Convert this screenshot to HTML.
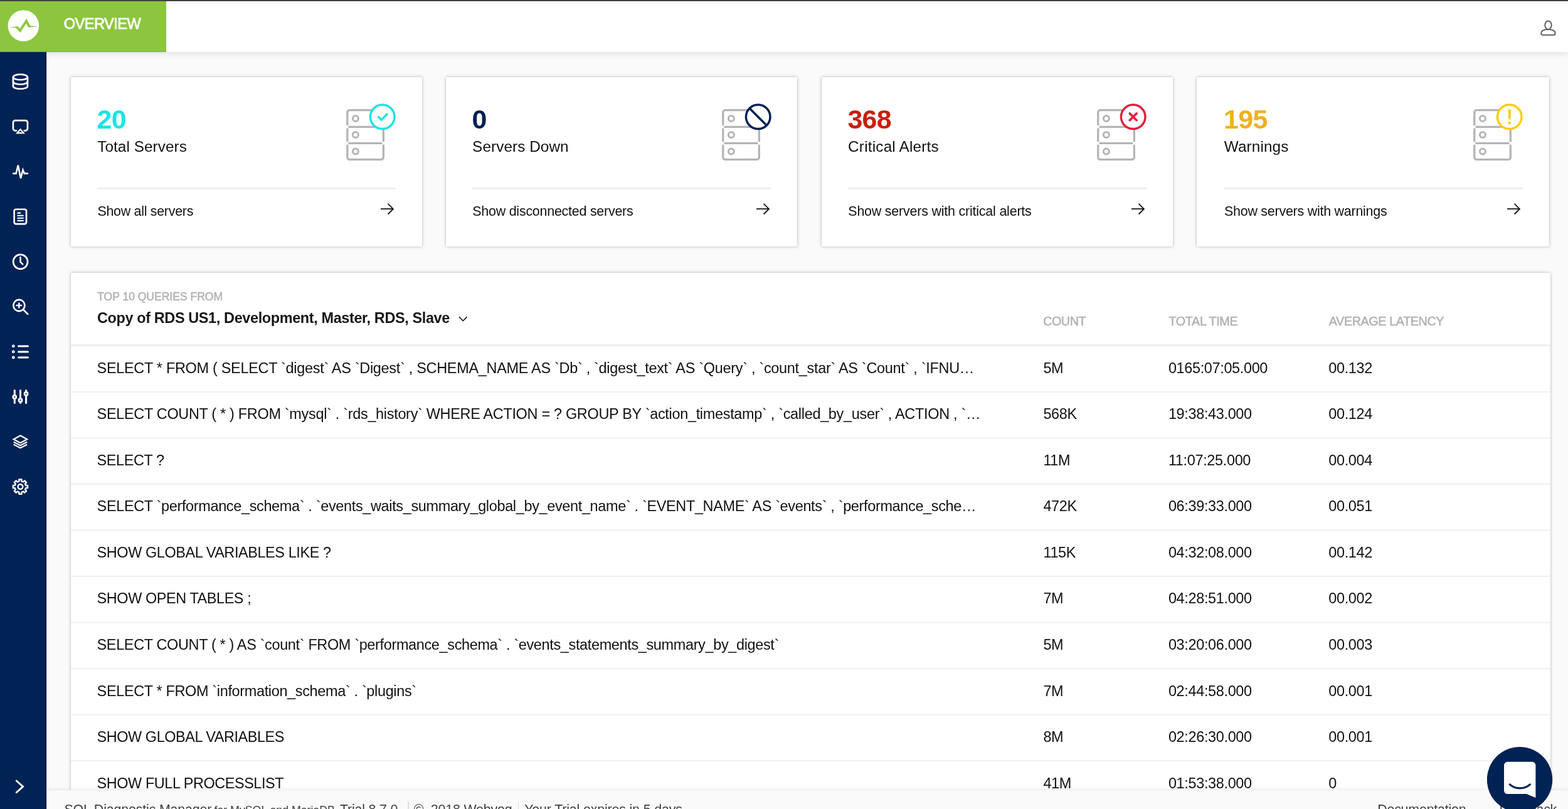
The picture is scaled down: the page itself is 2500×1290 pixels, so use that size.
<!DOCTYPE html>
<html lang="en"><head><meta charset="utf-8"><title>Overview</title>
<style>
*{box-sizing:border-box}
html,body{margin:0;padding:0}
body{width:2500px;height:1290px;overflow:hidden;position:relative;background:#fafafa;font-family:"Liberation Sans",Arial,Helvetica,sans-serif;color:#111}
.abs{position:absolute}
.t{position:absolute;white-space:pre}
#root{position:absolute;left:0;top:0;width:2500px;height:1290px;overflow:hidden;will-change:transform}
#topbar{position:absolute;left:0;top:0;width:2500px;height:1.8px;background:#414141;z-index:30}
#header{position:absolute;left:0;top:0;width:2500px;height:83px;background:#fff;box-shadow:0 1.5px 10px rgba(0,0,0,.12);z-index:20}
#brand{position:absolute;left:0;top:0;width:265px;height:83px;background:#8cc63e;box-shadow:inset 0 -1.2px 0 #7dc20a}
#sidebar{position:absolute;left:0;top:83px;width:74px;height:1207px;background:#012254;z-index:25;box-shadow:inset -1.2px 0 0 rgba(0,0,25,.6),0.5px 0 2px rgba(0,0,0,.12)}
.sbicons{position:absolute;left:0;top:0}
.card{position:absolute;top:122.8px;height:270.1px;background:#fff;box-shadow:0 0 4.5px rgba(0,0,0,.3)}
.card .hr{position:absolute;left:42.3px;right:42px;top:176px;height:3px;background:#efefef}
.card .arr{position:absolute;right:39.55px;top:197.3px}
.sico{position:absolute;right:32.6px;top:37.2px}
#panel{position:absolute;left:112.9px;top:434.8px;width:2359.4px;height:860px;background:#fff;box-shadow:0 0 4.5px rgba(0,0,0,.3)}
#footer{position:absolute;left:74px;top:1260.4px;width:2426px;height:30px;background:#fafafa;box-shadow:0 -1px 6px rgba(0,0,0,.10);z-index:22}
#footer i{position:absolute;top:17.5px;width:1.7px;height:20px;background:#dedede}
#chat{position:absolute;left:2371px;top:1191px;z-index:40}
</style></head><body><div id="root">

<div id="header"><div id="brand">
<svg class="abs" style="left:10px;top:14px" width="56" height="56" viewBox="10 14 56 56"><circle cx="37.4" cy="41" r="24.8" fill="#fff"/><path d="M15.04 43.4L28.3 42.1L31.6 45.7L42.2 29.7L48.1 41L60.1 42.3L45.4 43.8L41.6 37.6L32.4 52.1L25.3 44.2Z" fill="#8cc63e"/></svg>
<div class="t" style="left:101.8px;top:23.4px;font-size:23.59px;line-height:31px;letter-spacing:-0.536px;color:#fff;-webkit-text-stroke:0.85px #fff;">OVERVIEW</div>
</div>
<svg class="abs" style="left:2450px;top:28px" width="36" height="34" viewBox="2450 28 36 34" fill="none" stroke="#5e5e5e" stroke-width="2" stroke-linejoin="round"><path d="M2457.3 53C2457.3 48.6 2460.8 47 2468.45 47C2476.1 47 2479.6 48.6 2479.6 53Q2479.6 55.85 2477 55.85H2459.9Q2457.3 55.85 2457.3 53Z"/><ellipse cx="2468.45" cy="40.1" rx="5.2" ry="6.7" fill="#fff"/></svg>
</div><div id="topbar"></div>
<div id="sidebar"><svg class="sbicons" width="74" height="1207" viewBox="0 83 74 1207" fill="none" stroke="#fff" stroke-width="2.7" stroke-linecap="round" stroke-linejoin="round"><ellipse cx="32.45" cy="122.95" rx="11.5" ry="4.3"/><path d="M20.95 122.95V137.45A11.5 4.3 0 0 0 43.95 137.45V122.95"/><path d="M20.95 130.2A11.5 4.3 0 0 0 43.95 130.2"/><path d="M26.2 208.3H24.35a3.4 3.4 0 0 1 -3.4 -3.4V195.45a3.4 3.4 0 0 1 3.4 -3.4H40.55a3.4 3.4 0 0 1 3.4 3.4V204.9a3.4 3.4 0 0 1 -3.4 3.4H38.8"/><path d="M32.45 206.3L37.6 212.2H27.3Z" stroke-width="2.2" stroke-linejoin="miter"/><path d="M21.2 276.6H25.6L28.8 263.6L33 284.3L36.5 271L38.8 276.6H44" stroke-width="2.6" stroke-linejoin="miter"/><rect x="22.65" y="333.75" width="19.4" height="23.4" rx="2.8"/><path d="M27.5 339.6H33.2M27.5 343.7H37.7M27.5 347.8H37.7M27.5 351.9H37.7" stroke-width="2.1" stroke-linecap="butt"/><circle cx="32.6" cy="417.4" r="11.45"/><path d="M32.5 410.3V417.6L36.2 421.3" stroke-width="2.5"/><circle cx="30.4" cy="487" r="9.05"/><path d="M37.4 494L44.3 500.9"/><path d="M26.6 487H34.2M30.4 483.4V490.6" stroke-width="2.5"/><path d="M29.6 551.9H44.5" stroke-width="3"/><circle cx="21.3" cy="551.9" r="1.5" stroke-width="1.8"/><path d="M29.6 560.9H44.5" stroke-width="3"/><circle cx="21.3" cy="560.9" r="1.5" stroke-width="1.8"/><path d="M29.6 570.0H44.5" stroke-width="3"/><circle cx="21.3" cy="570.0" r="1.5" stroke-width="1.8"/><path d="M23.3 621.5V629.3M23.3 636.5V643.7" stroke-width="3" stroke-linecap="butt"/><circle cx="23.3" cy="632.9" r="2.5" stroke-width="2.8"/><path d="M32.5 621.5V634.6M32.5 641.8V643.7" stroke-width="3" stroke-linecap="butt"/><circle cx="32.5" cy="638.2" r="2.5" stroke-width="2.8"/><path d="M41.6 621.5V624.3M41.6 631.5V643.7" stroke-width="3" stroke-linecap="butt"/><circle cx="41.6" cy="627.9" r="2.5" stroke-width="2.8"/><path d="M32.45 694.6L43.2 700.4L32.45 706.2L21.7 700.4Z" stroke-width="2.3" stroke-linejoin="miter"/><path d="M21.7 704.7L32.45 710.3L43.2 704.7M21.7 708.7L32.45 714.3L43.2 708.7" stroke-width="2.1" stroke-linejoin="miter" stroke-linecap="butt"/><path d="M30.37 767.45 L30.42 764.48 L34.48 764.48 L34.53 767.45 L37.1 768.51 L39.24 766.45 L42.1 769.31 L40.04 771.45 L41.1 774.02 L44.07 774.07 L44.07 778.13 L41.1 778.18 L40.04 780.75 L42.1 782.89 L39.24 785.75 L37.1 783.69 L34.53 784.75 L34.48 787.72 L30.42 787.72 L30.37 784.75 L27.8 783.69 L25.66 785.75 L22.8 782.89 L24.86 780.75 L23.8 778.18 L20.83 778.13 L20.83 774.07 L23.8 774.02 L24.86 771.45 L22.8 769.31 L25.66 766.45 L27.8 768.51Z" stroke-width="2.4"/><circle cx="32.45" cy="776.1" r="3.9" stroke-width="2.4"/><path d="M26.2 1245L36.6 1254.3L26.2 1263.6" stroke-width="2.9" stroke-linejoin="miter" stroke-linecap="round"/></svg></div>
<div class="card" style="left:112.9px;width:559.85px">
<div class="t" style="left:41.6px;top:39.6px;font-size:42.92px;line-height:56px;letter-spacing:-0.695px;color:#1ae3e5;font-weight:bold;">20</div>
<div class="t" style="left:42.3px;top:95px;font-size:24.31px;line-height:32px;letter-spacing:0.077px;color:#111;">Total Servers</div>
<svg class="sico" width="100" height="110" viewBox="0 0 100 110" fill="none"><rect x="13.75" y="15.65" width="57.6" height="78.7" rx="3.5" stroke="#b4b5b5" stroke-width="3.3"/><path d="M13.75 42.3H71.35M13.75 68.4H71.35" stroke="#b4b5b5" stroke-width="3.3"/><rect x="11.7" y="40" width="3.8" height="4.6" fill="#fff"/><rect x="11.7" y="66.1" width="3.8" height="4.6" fill="#fff"/><rect x="69.3" y="66.1" width="3.8" height="4.6" fill="#fff"/><circle cx="26.9" cy="28.9" r="4.5" stroke="#b4b5b5" stroke-width="3"/><circle cx="26.9" cy="55.1" r="4.5" stroke="#b4b5b5" stroke-width="3"/><circle cx="26.9" cy="81.4" r="4.5" stroke="#b4b5b5" stroke-width="3"/><circle cx="69.7" cy="26.3" r="19.3" fill="#fff" stroke="#1de2e4" stroke-width="3.5"/><path d="M63.5 26.5l4.7 4.7l9 -9.2" stroke="#1de2e4" stroke-width="3.4" stroke-linecap="round" stroke-linejoin="miter"/></svg>
<div class="hr" style="left:42.3px"></div>
<div class="t" style="left:42.5px;top:199.9px;font-size:21.45px;line-height:28px;letter-spacing:-0.287px;color:#111;">Show all servers</div>
<svg class="arr" style="right:39.55px" width="30" height="26" viewBox="0 0 30 26" fill="none" stroke="#111" stroke-width="1.8"><path d="M4 13.2H23.6M15.6 4.9L23.9 13.2L15.6 21.5"/></svg></div>
<div class="card" style="left:710.8px;width:560.4px">
<div class="t" style="left:41.6px;top:39.6px;font-size:42.92px;line-height:56px;letter-spacing:-0.695px;color:#021f54;font-weight:bold;">0</div>
<div class="t" style="left:42.3px;top:95px;font-size:24.31px;line-height:32px;letter-spacing:0.083px;color:#111;">Servers Down</div>
<svg class="sico" width="100" height="110" viewBox="0 0 100 110" fill="none"><rect x="13.75" y="15.65" width="57.6" height="78.7" rx="3.5" stroke="#b4b5b5" stroke-width="3.3"/><path d="M13.75 42.3H71.35M13.75 68.4H71.35" stroke="#b4b5b5" stroke-width="3.3"/><rect x="11.7" y="40" width="3.8" height="4.6" fill="#fff"/><rect x="11.7" y="66.1" width="3.8" height="4.6" fill="#fff"/><rect x="69.3" y="66.1" width="3.8" height="4.6" fill="#fff"/><circle cx="26.9" cy="28.9" r="4.5" stroke="#b4b5b5" stroke-width="3"/><circle cx="26.9" cy="55.1" r="4.5" stroke="#b4b5b5" stroke-width="3"/><circle cx="26.9" cy="81.4" r="4.5" stroke="#b4b5b5" stroke-width="3"/><circle cx="69.7" cy="26.3" r="19.3" fill="#fff" stroke="#021f54" stroke-width="3.5"/><path d="M56.1 12.7L83.3 39.9" stroke="#021f54" stroke-width="3.5"/></svg>
<div class="hr" style="left:42.3px"></div>
<div class="t" style="left:42.5px;top:199.9px;font-size:21.45px;line-height:28px;letter-spacing:-0.238px;color:#111;">Show disconnected servers</div>
<svg class="arr" style="right:39.55px" width="30" height="26" viewBox="0 0 30 26" fill="none" stroke="#111" stroke-width="1.8"><path d="M4 13.2H23.6M15.6 4.9L23.9 13.2L15.6 21.5"/></svg></div>
<div class="card" style="left:1309.8px;width:560.2px">
<div class="t" style="left:41.6px;top:39.6px;font-size:42.92px;line-height:56px;letter-spacing:-0.695px;color:#c6200c;font-weight:bold;">368</div>
<div class="t" style="left:42.3px;top:95px;font-size:24.31px;line-height:32px;letter-spacing:0.200px;color:#111;">Critical Alerts</div>
<svg class="sico" width="100" height="110" viewBox="0 0 100 110" fill="none"><rect x="13.75" y="15.65" width="57.6" height="78.7" rx="3.5" stroke="#b4b5b5" stroke-width="3.3"/><path d="M13.75 42.3H71.35M13.75 68.4H71.35" stroke="#b4b5b5" stroke-width="3.3"/><rect x="11.7" y="40" width="3.8" height="4.6" fill="#fff"/><rect x="11.7" y="66.1" width="3.8" height="4.6" fill="#fff"/><rect x="69.3" y="66.1" width="3.8" height="4.6" fill="#fff"/><circle cx="26.9" cy="28.9" r="4.5" stroke="#b4b5b5" stroke-width="3"/><circle cx="26.9" cy="55.1" r="4.5" stroke="#b4b5b5" stroke-width="3"/><circle cx="26.9" cy="81.4" r="4.5" stroke="#b4b5b5" stroke-width="3"/><circle cx="69.7" cy="26.3" r="19.3" fill="#fff" stroke="#e0203c" stroke-width="3.5"/><path d="M64.3 20.9l10.8 10.8M75.1 20.9l-10.8 10.8" stroke="#e0203c" stroke-width="3.7" stroke-linecap="round"/></svg>
<div class="hr" style="left:42.3px"></div>
<div class="t" style="left:42.5px;top:199.9px;font-size:21.45px;line-height:28px;letter-spacing:-0.204px;color:#111;">Show servers with critical alerts</div>
<svg class="arr" style="right:39.55px" width="30" height="26" viewBox="0 0 30 26" fill="none" stroke="#111" stroke-width="1.8"><path d="M4 13.2H23.6M15.6 4.9L23.9 13.2L15.6 21.5"/></svg></div>
<div class="card" style="left:1907.9px;width:562.2px">
<div class="t" style="left:43.2px;top:39.6px;font-size:42.92px;line-height:56px;letter-spacing:-0.695px;color:#ecb220;font-weight:bold;">195</div>
<div class="t" style="left:43.9px;top:95px;font-size:24.31px;line-height:32px;letter-spacing:0.125px;color:#111;">Warnings</div>
<svg class="sico" width="100" height="110" viewBox="0 0 100 110" fill="none"><rect x="13.75" y="15.65" width="57.6" height="78.7" rx="3.5" stroke="#b4b5b5" stroke-width="3.3"/><path d="M13.75 42.3H71.35M13.75 68.4H71.35" stroke="#b4b5b5" stroke-width="3.3"/><rect x="11.7" y="40" width="3.8" height="4.6" fill="#fff"/><rect x="11.7" y="66.1" width="3.8" height="4.6" fill="#fff"/><rect x="69.3" y="66.1" width="3.8" height="4.6" fill="#fff"/><circle cx="26.9" cy="28.9" r="4.5" stroke="#b4b5b5" stroke-width="3"/><circle cx="26.9" cy="55.1" r="4.5" stroke="#b4b5b5" stroke-width="3"/><circle cx="26.9" cy="81.4" r="4.5" stroke="#b4b5b5" stroke-width="3"/><circle cx="69.7" cy="26.3" r="19.3" fill="#fff" stroke="#ffcc05" stroke-width="3.5"/><path d="M67.4 14.7h4.6l-0.7 15.6h-3.2zM67.6 33.9h4.2v4.2h-4.2z" fill="#ffcc05"/></svg>
<div class="hr" style="left:43.26px"></div>
<div class="t" style="left:44.1px;top:199.9px;font-size:21.45px;line-height:28px;letter-spacing:-0.240px;color:#111;">Show servers with warnings</div>
<svg class="arr" style="right:41.15px" width="30" height="26" viewBox="0 0 30 26" fill="none" stroke="#111" stroke-width="1.8"><path d="M4 13.2H23.6M15.6 4.9L23.9 13.2L15.6 21.5"/></svg></div>
<div id="panel">
<div class="t" style="left:42.3px;top:27.4px;font-size:17.56px;line-height:23px;letter-spacing:-0.021px;color:#b2b2b2;-webkit-text-stroke:0.5px #b2b2b2;">TOP 10 QUERIES FROM</div>
<div class="t" style="left:42.1px;top:57px;font-size:23.41px;line-height:31px;letter-spacing:-0.351px;color:#161616;font-weight:bold;">Copy of RDS US1, Development, Master, RDS, Slave</div>
<svg class="abs" style="left:615.9px;top:67.6px" width="20" height="14" viewBox="0 0 20 14" fill="none" stroke="#222" stroke-width="1.7"><path d="M3 3.2L9.3 9.6L15.6 3.2"/></svg>
<div class="t" style="left:1550.3px;top:64.5px;font-size:19.78px;line-height:26px;letter-spacing:-0.490px;color:#b2b2b2;-webkit-text-stroke:0.5px #b2b2b2;">COUNT</div>
<div class="t" style="left:1750.6px;top:64.5px;font-size:19.78px;line-height:26px;letter-spacing:-0.371px;color:#b2b2b2;-webkit-text-stroke:0.5px #b2b2b2;">TOTAL TIME</div>
<div class="t" style="left:2005.9px;top:64.5px;font-size:19.78px;line-height:26px;letter-spacing:-0.394px;color:#b2b2b2;-webkit-text-stroke:0.5px #b2b2b2;">AVERAGE LATENCY</div>
<svg class="abs" style="left:0;top:0" width="2359.4" height="860" viewBox="0 0 2359.4 860"><rect x="0" y="114.1" width="2359.4" height="3.1" fill="#efefef"/><rect x="0" y="189" width="2359.4" height="1.85" fill="#efefef"/><rect x="0" y="262.53" width="2359.4" height="1.85" fill="#efefef"/><rect x="0" y="336.06" width="2359.4" height="1.85" fill="#efefef"/><rect x="0" y="409.59" width="2359.4" height="1.85" fill="#efefef"/><rect x="0" y="483.12" width="2359.4" height="1.85" fill="#efefef"/><rect x="0" y="556.65" width="2359.4" height="1.85" fill="#efefef"/><rect x="0" y="630.18" width="2359.4" height="1.85" fill="#efefef"/><rect x="0" y="703.71" width="2359.4" height="1.85" fill="#efefef"/><rect x="0" y="777.24" width="2359.4" height="1.85" fill="#efefef"/><rect x="0" y="850.77" width="2359.4" height="1.85" fill="#efefef"/></svg>
<div class="t" style="left:41.7px;top:137.1px;font-size:23.45px;line-height:31px;letter-spacing:-0.284px;color:#111;">SELECT * FROM ( SELECT `digest` AS `Digest` , SCHEMA_NAME AS `Db` , `digest_text` AS `Query` , `count_star` AS `Count` , `IFNU…</div>
<div class="t" style="left:1550.6px;top:137.1px;font-size:23.45px;line-height:31px;letter-spacing:-0.474px;color:#111;">5M</div>
<div class="t" style="left:1750px;top:137.1px;font-size:23.45px;line-height:31px;letter-spacing:-0.339px;color:#111;">0165:07:05.000</div>
<div class="t" style="left:2005.4px;top:137.1px;font-size:23.45px;line-height:31px;letter-spacing:-0.348px;color:#111;">00.132</div>
<div class="t" style="left:41.7px;top:210.62px;font-size:23.45px;line-height:31px;letter-spacing:-0.299px;color:#111;">SELECT COUNT ( * ) FROM `mysql` . `rds_history` WHERE ACTION = ? GROUP BY `action_timestamp` , `called_by_user` , ACTION , `…</div>
<div class="t" style="left:1550.6px;top:210.62px;font-size:23.45px;line-height:31px;letter-spacing:-0.399px;color:#111;">568K</div>
<div class="t" style="left:1750px;top:210.62px;font-size:23.45px;line-height:31px;letter-spacing:-0.332px;color:#111;">19:38:43.000</div>
<div class="t" style="left:2005.4px;top:210.62px;font-size:23.45px;line-height:31px;letter-spacing:-0.348px;color:#111;">00.124</div>
<div class="t" style="left:41.7px;top:284.14px;font-size:23.45px;line-height:31px;letter-spacing:-0.402px;color:#111;">SELECT ?</div>
<div class="t" style="left:1550.6px;top:284.14px;font-size:23.45px;line-height:31px;letter-spacing:-0.426px;color:#111;">11M</div>
<div class="t" style="left:1750px;top:284.14px;font-size:23.45px;line-height:31px;letter-spacing:-0.328px;color:#111;">11:07:25.000</div>
<div class="t" style="left:2005.4px;top:284.14px;font-size:23.45px;line-height:31px;letter-spacing:-0.348px;color:#111;">00.004</div>
<div class="t" style="left:41.7px;top:357.66px;font-size:23.45px;line-height:31px;letter-spacing:-0.331px;color:#111;">SELECT `performance_schema` . `events_waits_summary_global_by_event_name` . `EVENT_NAME` AS `events` , `performance_sche…</div>
<div class="t" style="left:1550.6px;top:357.66px;font-size:23.45px;line-height:31px;letter-spacing:-0.399px;color:#111;">472K</div>
<div class="t" style="left:1750px;top:357.66px;font-size:23.45px;line-height:31px;letter-spacing:-0.332px;color:#111;">06:39:33.000</div>
<div class="t" style="left:2005.4px;top:357.66px;font-size:23.45px;line-height:31px;letter-spacing:-0.348px;color:#111;">00.051</div>
<div class="t" style="left:41.7px;top:431.18px;font-size:23.45px;line-height:31px;letter-spacing:-0.400px;color:#111;">SHOW GLOBAL VARIABLES LIKE ?</div>
<div class="t" style="left:1550.6px;top:431.18px;font-size:23.45px;line-height:31px;letter-spacing:-0.386px;color:#111;">115K</div>
<div class="t" style="left:1750px;top:431.18px;font-size:23.45px;line-height:31px;letter-spacing:-0.332px;color:#111;">04:32:08.000</div>
<div class="t" style="left:2005.4px;top:431.18px;font-size:23.45px;line-height:31px;letter-spacing:-0.348px;color:#111;">00.142</div>
<div class="t" style="left:41.7px;top:504.7px;font-size:23.45px;line-height:31px;letter-spacing:-0.410px;color:#111;">SHOW OPEN TABLES ;</div>
<div class="t" style="left:1550.6px;top:504.7px;font-size:23.45px;line-height:31px;letter-spacing:-0.474px;color:#111;">7M</div>
<div class="t" style="left:1750px;top:504.7px;font-size:23.45px;line-height:31px;letter-spacing:-0.332px;color:#111;">04:28:51.000</div>
<div class="t" style="left:2005.4px;top:504.7px;font-size:23.45px;line-height:31px;letter-spacing:-0.348px;color:#111;">00.002</div>
<div class="t" style="left:41.7px;top:578.22px;font-size:23.45px;line-height:31px;letter-spacing:-0.336px;color:#111;">SELECT COUNT ( * ) AS `count` FROM `performance_schema` . `events_statements_summary_by_digest`</div>
<div class="t" style="left:1550.6px;top:578.22px;font-size:23.45px;line-height:31px;letter-spacing:-0.474px;color:#111;">5M</div>
<div class="t" style="left:1750px;top:578.22px;font-size:23.45px;line-height:31px;letter-spacing:-0.332px;color:#111;">03:20:06.000</div>
<div class="t" style="left:2005.4px;top:578.22px;font-size:23.45px;line-height:31px;letter-spacing:-0.348px;color:#111;">00.003</div>
<div class="t" style="left:41.7px;top:651.74px;font-size:23.45px;line-height:31px;letter-spacing:-0.332px;color:#111;">SELECT * FROM `information_schema` . `plugins`</div>
<div class="t" style="left:1550.6px;top:651.74px;font-size:23.45px;line-height:31px;letter-spacing:-0.474px;color:#111;">7M</div>
<div class="t" style="left:1750px;top:651.74px;font-size:23.45px;line-height:31px;letter-spacing:-0.332px;color:#111;">02:44:58.000</div>
<div class="t" style="left:2005.4px;top:651.74px;font-size:23.45px;line-height:31px;letter-spacing:-0.348px;color:#111;">00.001</div>
<div class="t" style="left:41.7px;top:725.26px;font-size:23.45px;line-height:31px;letter-spacing:-0.427px;color:#111;">SHOW GLOBAL VARIABLES</div>
<div class="t" style="left:1550.6px;top:725.26px;font-size:23.45px;line-height:31px;letter-spacing:-0.474px;color:#111;">8M</div>
<div class="t" style="left:1750px;top:725.26px;font-size:23.45px;line-height:31px;letter-spacing:-0.332px;color:#111;">02:26:30.000</div>
<div class="t" style="left:2005.4px;top:725.26px;font-size:23.45px;line-height:31px;letter-spacing:-0.348px;color:#111;">00.001</div>
<div class="t" style="left:41.7px;top:798.78px;font-size:23.45px;line-height:31px;letter-spacing:-0.425px;color:#111;">SHOW FULL PROCESSLIST</div>
<div class="t" style="left:1550.6px;top:798.78px;font-size:23.45px;line-height:31px;letter-spacing:-0.443px;color:#111;">41M</div>
<div class="t" style="left:1750px;top:798.78px;font-size:23.45px;line-height:31px;letter-spacing:-0.332px;color:#111;">01:53:38.000</div>
<div class="t" style="left:2005.4px;top:798.78px;font-size:23.45px;line-height:31px;letter-spacing:-0.380px;color:#111;">0</div>
</div>
<div id="footer">
<div class="t" style="left:28.5px;top:16.3px;font-size:21.45px;line-height:28px;letter-spacing:-0.180px;color:#404040;">SQL Diagnostic Manager</div>
<div class="t" style="left:267.6px;top:19.3px;font-size:17.88px;line-height:24px;letter-spacing:-0.079px;color:#404040;">for MySQL and MariaDB</div>
<div class="t" style="left:467.9px;top:16.3px;font-size:21.45px;line-height:28px;letter-spacing:-0.196px;color:#404040;">Trial 8.7.0</div>
<i style="left:576.3px"></i>
<div class="t" style="left:585.7px;top:16.3px;font-size:21.45px;line-height:28px;letter-spacing:-0.204px;color:#404040;">©  2018 Webyog</div>
<i style="left:751.6px"></i>
<div class="t" style="left:762.2px;top:16.3px;font-size:21.45px;line-height:28px;letter-spacing:-0.181px;color:#404040;">Your Trial expires in 5 days</div>
<div class="t" style="left:2122.2px;top:16.3px;font-size:21.45px;line-height:28px;letter-spacing:-0.231px;color:#404040;">Documentation</div>
<div class="t" style="left:2316.5px;top:16.3px;font-size:21.45px;line-height:28px;letter-spacing:-0.343px;color:#404040;">Feedback</div>
</div>
<svg id="chat" width="106" height="106" viewBox="2371 1191 106 106"><circle cx="2423" cy="1243.2" r="52.2" fill="#012254"/><path d="M2403.4 1214.8h39.6a5.4 5.4 0 0 1 5.4 5.4V1271.9l-14.6 -5.9h-30.4a5.4 5.4 0 0 1 -5.4 -5.4v-40.4a5.4 5.4 0 0 1 5.4 -5.4z" fill="#fff"/><path d="M2407.2 1250.9A23 21 0 0 0 2439.4 1250.9" fill="none" stroke="#012254" stroke-width="3.2" stroke-linecap="round"/></svg>
</div></body></html>
